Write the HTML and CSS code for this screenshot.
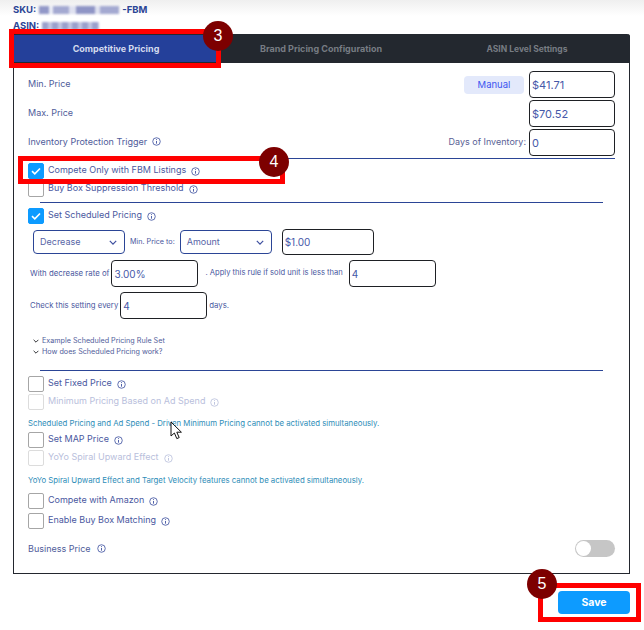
FILE: index.html
```html
<!DOCTYPE html>
<html lang="en">
<head>
<meta charset="utf-8">
<title>Competitive Pricing</title>
<link rel="stylesheet" href="styles.css">
</head>
<body>
<svg width="0" height="0" class="defs"><defs>
<symbol id="info" viewBox="0 0 10 10"><circle cx="5" cy="5" r="4.2" fill="none" stroke="currentColor" stroke-width=".9"/><path d="M5 4.4v3M5 2.4v1" stroke="currentColor" stroke-width="1" fill="none"/></symbol>
<symbol id="chev" viewBox="0 0 10 6"><path d="M1 1l4 4 4-4" fill="none" stroke="currentColor" stroke-width="1.5"/></symbol>
<symbol id="tick" viewBox="0 0 16 16"><path d="M4 8.2l2.8 2.6L12 5.5" fill="none" stroke="#fff" stroke-width="1.6"/></symbol>
</defs></svg>
<div class="page">
  <div class="fade"></div>
  <header class="meta">
    <div class="meta-line meta-sku">SKU: <span class="blur blur-sku"></span>-FBM</div>
    <div class="meta-line meta-asin">ASIN: <span class="blur blur-asin"></span></div>
  </header>
  <section class="panel">
    <nav class="tabs">
      <div class="tab tab-active">Competitive Pricing</div>
      <div class="tab">Brand Pricing Configuration</div>
      <div class="tab tab-narrow">ASIN Level Settings</div>
    </nav>
    <div class="body">
      <div class="price-row">
        <span class="label">Min. Price</span>
        <span class="pill">Manual</span>
        <span class="field field-price">$41.71</span>
      </div>
      <div class="price-row">
        <span class="label">Max. Price</span>
        <span class="field field-price">$70.52</span>
      </div>
      <div class="price-row">
        <span class="label">Inventory Protection Trigger <svg class="i"><use href="#info"/></svg></span>
        <span class="label days">Days of Inventory:</span>
        <span class="field field-price">0</span>
      </div>
      <hr class="rule rule-wide">
      <div class="check check-fbm"><span class="box on"><svg width="16" height="16"><use href="#tick"/></svg></span>Compete Only with FBM Listings <svg class="i"><use href="#info"/></svg></div>
      <div class="check check-buy"><span class="box"></span>Buy Box Suppression Threshold <svg class="i"><use href="#info"/></svg></div>
      <hr class="rule rule-short">
      <div class="check check-sched"><span class="box on"><svg width="16" height="16"><use href="#tick"/></svg></span>Set Scheduled Pricing <svg class="i"><use href="#info"/></svg></div>
      <div class="form-row form-row-select">
        <span class="select">Decrease<svg class="chev"><use href="#chev"/></svg></span>
        <span class="small small-to">Min. Price to:</span>
        <span class="select">Amount<svg class="chev"><use href="#chev"/></svg></span>
        <span class="field field-amount">$1.00</span>
      </div>
      <div class="form-row form-row-rate">
        <span class="small">With decrease rate of</span>
        <span class="field field-rate">3.00%</span>
        <span class="small apply">. Apply this rule if sold unit is less than</span>
        <span class="field field-rate">4</span>
      </div>
      <div class="form-row form-row-rate">
        <span class="small small-check">Check this setting every</span>
        <span class="field field-rate">4</span>
        <span class="small">days.</span>
      </div>
      <div class="link link-first"><svg class="chev-small"><use href="#chev"/></svg>Example Scheduled Pricing Rule Set</div>
      <div class="link"><svg class="chev-small"><use href="#chev"/></svg>How does Scheduled Pricing work?</div>
      <hr class="rule rule-short rule-third">
      <div class="check check-fixed"><span class="box"></span>Set Fixed Price <svg class="i"><use href="#info"/></svg></div>
      <div class="check check-tight disabled"><span class="box"></span>Minimum Pricing Based on Ad Spend <svg class="i"><use href="#info"/></svg></div>
      <p class="note note-first">Scheduled Pricing and Ad Spend - Driven Minimum Pricing cannot be activated simultaneously.</p>
      <div class="check check-map"><span class="box"></span>Set MAP Price <svg class="i"><use href="#info"/></svg></div>
      <div class="check check-tight disabled"><span class="box"></span>YoYo Spiral Upward Effect <svg class="i"><use href="#info"/></svg></div>
      <p class="note note-second">YoYo Spiral Upward Effect and Target Velocity features cannot be activated simultaneously.</p>
      <div class="check check-amazon"><span class="box"></span>Compete with Amazon <svg class="i"><use href="#info"/></svg></div>
      <div class="check check-match"><span class="box"></span>Enable Buy Box Matching <svg class="i"><use href="#info"/></svg></div>
      <div class="business">
        <span class="label">Business Price <svg class="i i-gap"><use href="#info"/></svg></span>
        <span class="toggle"><span class="knob"></span></span>
      </div>
    </div>
  </section>
  <footer class="actions"><button class="save">Save</button></footer>

  <div class="mark mark-3"></div>
  <div class="mark mark-4"></div>
  <div class="mark mark-5"></div>
  <div class="badge badge-3">3</div>
  <div class="badge badge-4">4</div>
  <div class="badge badge-5">5</div>
  <svg class="cursor" width="14" height="20" viewBox="0 0 14 20"><path d="M1 1v14l3.4-3 2.4 5.6 2.4-1-2.4-5.4h4.6z" fill="#fff" stroke="#111" stroke-width="1"/></svg>
</div>
</body>
</html>
```
FILE: styles.css
```css
* { box-sizing: border-box; }
html, body { margin: 0; padding: 0; background: #fff; }
body { font-family: Inter, "Noto Sans", "Liberation Sans", sans-serif; color: #4353a0; font-size: 9px; }
.defs { position: absolute; }
.page { position: relative; width: 644px; height: 630px; overflow: hidden; }
.fade { position: absolute; left: 0; top: 0; right: 0; height: 16px; background: linear-gradient(#efefef, #fff); }

.meta { position: relative; height: 34px; padding: 2px 0 0 13px; }
.meta-line { font-weight: 700; font-size: 9.5px; color: #2b4596; line-height: 14px; height: 16px; display: flex; align-items: center; gap: 3px; }
.blur { display: inline-block; height: 8px; filter: blur(.8px); }
.blur-sku { width: 80px; background: linear-gradient(90deg, #9298c8 0 12%, #eceef7 12% 18%, #a4a9d1 18% 38%, #dfe1f0 38% 46%, #8f95c6 46% 70%, #dfe1f0 70% 76%, #a4a9d1 76%); }
.blur-asin { width: 57px; background: repeating-linear-gradient(90deg, #9aa0cc 0 6px, #c2c6e2 6px 10px); }

.panel { margin: 0 14px 0 13px; height: 540px; border: 1px solid #23272e; border-top: 0; border-radius: 3px 3px 0 0; }
.tabs { display: grid; grid-template-columns: 204px 1fr 206px; height: 29px; margin: 0 -1px 0 0; background: #23282f; border-radius: 3px 3px 0 0; }
.tab { display: flex; align-items: center; justify-content: center; color: #777c83; font-weight: 700; font-size: 9px; }
.tab-narrow { font-size: 8.5px; }
.tab-active { background: #24409a; color: #d5dbee; border-top: 1px solid #23282f; border-bottom: 1px solid #23282f; }

.body { padding: 8px 14px 0; }
.label { font-size: 9px; color: #4f5c9a; white-space: nowrap; display: inline-flex; align-items: center; gap: 4px; }
.price-row { display: flex; align-items: center; height: 27px; margin-bottom: 2px; }
.price-row .label { padding-bottom: 2px; }
.price-row .label:first-child { margin-right: auto; }
.pill { width: 60px; height: 18px; margin-right: 5px; border-radius: 4px; background: #e3e9fb; color: #3c55f0; display: flex; align-items: center; justify-content: center; font-size: 9.5px; }
.days { margin-right: 3px; color: #5a5f96; }
.field { display: flex; align-items: center; border: 1px solid #1e2024; border-radius: 4px; background: #fff; color: #4658a8; font-size: 10px; padding-left: 2px; }
.field-price { width: 86px; height: 100%; font-size: 11px; }
.field-amount { width: 92px; height: 26px; margin-left: 10px; }
.field-rate { width: 87px; height: 27px; margin: 0 2px; }

.rule { border: 0; margin: 0; height: 1px; background: #2b4596; }
.rule-wide { margin: 0 0 0 -8px; }
.rule-short { margin: 5px 12px 0 12px; }
.rule-third { margin-top: 13px; }

.check { display: flex; align-items: flex-start; gap: 4px; height: 16px; font-size: 9px; line-height: 14px; color: #4a58a0; white-space: nowrap; }
.box { width: 16px; height: 16px; flex: none; border: 1px solid #a6a6a6; border-radius: 2px; background: #fff; }
.box.on { background: #0d9bff; border-color: #0d9bff; }
.box.on svg { display: block; margin: -1px; }
.i { width: 9px; height: 9px; flex: none; margin-left: 1px; color: #3d4f9f; align-self: center; }
.i-gap { margin-left: 2px; }
.check-fbm { margin-top: 4px; }
.check-buy { margin-top: 2px; }
.check-sched { margin-top: 5px; }
.check-fixed { margin-top: 5px; }
.check-tight { margin-top: 2px; }
.check-map { margin-top: 4px; }
.check-amazon { margin-top: 8px; }
.check-match { margin-top: 4px; }
.disabled { color: #b9c0dc; }
.disabled .box { border-color: #dcdcdc; }
.disabled .i { color: #b9c0dc; }

.form-row { display: flex; align-items: center; white-space: nowrap; }
.form-row-select { margin: 5px 0 0 5px; height: 26px; }
.form-row-rate { margin: 5px 0 0 2px; height: 27px; }
.small { font-size: 7.8px; color: #4a58a0; padding-bottom: 2px; }
.small-to { font-size: 7.2px; margin: 0 5px; }
.small-check { font-size: 7.75px; }
.apply { font-size: 7.6px; margin: 0 4px 0 5px; }
.select { width: 92px; height: 24px; border: 1px solid #2b4596; border-radius: 4px; display: flex; align-items: center; justify-content: space-between; padding: 0 7px 2px 6px; font-size: 9px; color: #5764a6; }
.chev { width: 8px; height: 5px; color: #3d4f9f; margin-top: 2px; }

.link { display: flex; align-items: center; gap: 3px; height: 11px; margin-left: 5px; font-size: 7.2px; color: #4f5c9a; white-space: nowrap; }
.link-first { margin-top: 16px; }
.chev-small { width: 6px; height: 4px; color: #1e2024; }

.note { margin: 0; font-size: 7.8px; color: #2e8db8; white-space: nowrap; line-height: 10px; }
.note-first { margin-top: 8px; }
.note-second { margin-top: 9px; }

.business { display: flex; align-items: center; justify-content: space-between; margin-top: 10px; height: 18px; }
.toggle { width: 40px; height: 17px; border-radius: 9px; background: #c6c6c6; display: flex; align-items: center; padding-left: 1px; }
.knob { width: 15px; height: 15px; border-radius: 50%; background: #fff; }

.actions { display: flex; justify-content: flex-end; padding: 17px 14px 0 0; }
.save { width: 72px; height: 23px; border: 0; border-radius: 4px; background: #0d9bff; color: #fff; font: 700 10.5px Inter, sans-serif; }

.mark { position: absolute; border: 5px solid #ff0000; }
.mark-3 { left: 9px; top: 29px; width: 212px; height: 39px; }
.mark-4 { left: 18px; top: 156px; width: 267px; height: 28px; }
.mark-5 { left: 538px; top: 583px; width: 103px; height: 39px; }
.badge { position: absolute; width: 30px; height: 30px; border-radius: 50%; background: #7d0000; color: #fff; display: flex; align-items: center; justify-content: center; font: 16px "Liberation Sans", sans-serif; }
.badge-3 { left: 203px; top: 21px; }
.badge-4 { left: 259px; top: 147px; }
.badge-5 { left: 527px; top: 569px; }
.cursor { position: absolute; left: 170px; top: 421px; }
```
